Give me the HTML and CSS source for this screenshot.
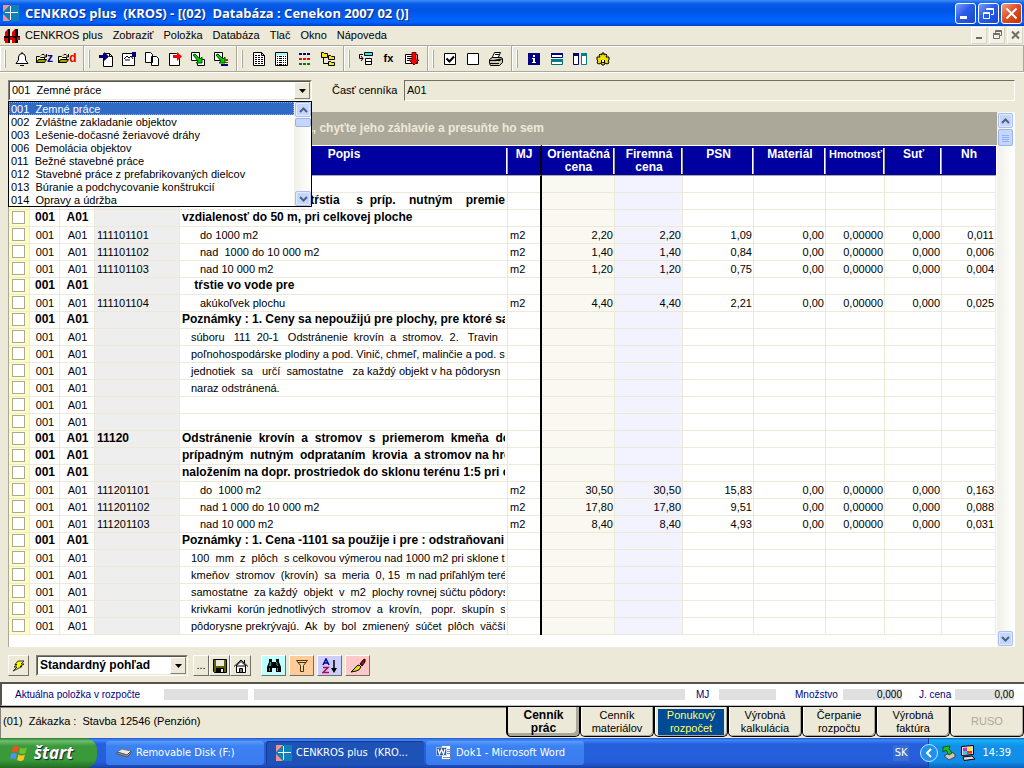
FILE: index.html
```html
<!DOCTYPE html>
<html lang="sk">
<head>
<meta charset="utf-8">
<title>CENKROS plus</title>
<link rel="stylesheet" href="styles.css">
</head>
<body>
<svg class="defs" width="0" height="0" aria-hidden="true">
  <symbol id="logo" viewBox="0 0 16 16"><path fill="#1080b8" d="M0 0h16v16H0z"/><path fill="#f89090" d="M0 0h7L0 7zM0 9l7 7H0z"/><path fill="#fff" d="M7 1h1v14H7zM2 7h13v1H2z"/></symbol>
  <symbol id="up" viewBox="0 0 9 6"><path fill="none" stroke="#4d6185" stroke-width="2" d="M1 5l3.5-3.500L8 5"/></symbol>
  <symbol id="down" viewBox="0 0 9 6"><path fill="none" stroke="#4d6185" stroke-width="2" d="M1 1l3.5 3.500L8 1"/></symbol>
  <symbol id="tri" viewBox="0 0 7 4"><path d="M0 0h7L3.500 4z"/></symbol>
  <symbol id="folder" viewBox="0 0 11 11"><path fill="#ffff80" stroke="#000" d="M.5 9.500v-6h3l1 1h4v2"/><path fill="#a0a000" stroke="#000" d="M.5 9.500l2-3h8l-2 3z"/><path fill="none" stroke="#000" d="M5 2.500l1-1h2l2 2M10.500 1v3H8"/></symbol>
</svg>

<header class="titlebar">
  <svg class="i16"><use href="#logo"/></svg>
  <h1>CENKROS plus  (KROS) - [(02)  Databáza : Cenekon 2007 02 ()]</h1>
  <div class="winbtns">
    <button aria-label="Minimalizovať"><svg width="19" height="19"><path fill="#fff" d="M4 12h7v3H4z"/></svg></button>
    <button aria-label="Obnoviť"><svg width="19" height="19"><path fill="none" stroke="#fff" d="M7.500 6V4.500h7v6H12M7 5.500h7M4.500 8.500h6v6h-6zM4 9.500h7"/></svg></button>
    <button class="close" aria-label="Zavrieť"><svg width="19" height="19"><path stroke="#fff" stroke-width="2" d="M4.500 4.500l10 10M14.500 4.500l-10 10"/></svg></button>
  </div>
</header>

<nav class="menubar">
  <svg class="i16" viewBox="0 0 16 16"><path fill="#e00000" d="M1 4l3-3v14H1zM8 4l3-3v14H8z"/><path d="M4 1h2v14H4zM11 1h3v14h-3zM0 8h16v2H0z"/><path fill="#e00000" d="M6 9h3v3H6zM0 10h2v3H0zM13 9h3v3h-3z"/></svg>
  <button>CENKROS plus</button><button>Zobraziť</button><button>Položka</button><button>Databáza</button><button>Tlač</button><button>Okno</button><button>Nápoveda</button>
  <div class="mdi">
    <button aria-label="Minimalizovať okno"><svg width="15" height="15"><path fill="#716f64" d="M4 9h6v2H4z"/></svg></button>
    <button aria-label="Obnoviť okno"><svg width="15" height="15"><path fill="none" stroke="#716f64" d="M5.500 5V2.500h6v5H10M5 3.500h7M3.500 6.500h6v4h-6zM3 5.500h7"/></svg></button>
    <button aria-label="Zavrieť okno"><svg width="15" height="15"><path stroke="#716f64" stroke-width="2" d="M4 3.500l7 7M11 3.500l-7 7"/></svg></button>
  </div>
</nav>

<div class="toolbar">
  <div class="group"><i class="grip"></i>
    <button aria-label="Upozornenie"><svg class="i16" viewBox="0 0 16 16"><path fill="#fff" stroke="#000" d="M2 12.500h12L11.500 9V6Q11 2.500 8 2.500T4.500 6v3z"/><path fill="none" stroke="#000" d="M8 1v2M6 14.500h4"/></svg></button>
    <button class="open" aria-label="Otvoriť zákazku"><svg width="11" height="11"><use href="#folder"/></svg><b class="navy">z</b></button>
    <button class="open" aria-label="Otvoriť databázu"><svg width="11" height="11"><use href="#folder"/></svg><b class="red">d</b></button>
  </div>
  <div class="group"><i class="grip"></i>
    <button aria-label="Vložiť položku"><svg class="i16" viewBox="0 0 16 16"><path fill="#fff" stroke="#000" d="M5.500 2.500h6l3 3v10h-9zM11.500 2.500v3h3"/><path fill="#000080" d="M1 4h5V1l5 4.500L6 10V7H1z"/></svg></button>
    <button aria-label="Upraviť položku"><svg class="i16" viewBox="0 0 16 16"><path fill="#fff" stroke="#000" d="M1.500 2.500h12v12h-12z"/><path fill="none" stroke="#000" d="M3 8l3-3 2 2 2-2 2 3M4 9h5"/><path fill="#000080" d="M11 1h4v5h-4z"/></svg></button>
    <button aria-label="Kopírovať"><svg class="i16" viewBox="0 0 16 16"><path fill="#fff" stroke="#000" d="M1.500 1.500h5l2 2v8h-7zM7.500 5.500h5l2 2v7h-7z"/></svg></button>
    <button aria-label="Presunúť"><svg class="i16" viewBox="0 0 16 16"><path fill="#fff" stroke="#000" d="M2.500 2.500h7l3 3v9h-10z"/><path fill="#f00" d="M6 4h4V1l5 4.500L10 10V7H6z"/></svg></button>
    <button aria-label="Kopírovať blok"><svg class="i16" viewBox="0 0 16 16"><path fill="#fff" stroke="#000" d="M1.500 1.500h8v8h-8zM10.500 8.500h4v6h-7v-4"/><path fill="#00d000" stroke="#005000" d="M3 4l2-1 5 5 2-2v6H6l2-2z"/></svg></button>
    <button aria-label="Kopírovať rozpočet"><svg class="i16" viewBox="0 0 16 16"><path fill="#fff" stroke="#000" d="M1.500 1.500h8v8h-8z"/><path fill="#00d000" stroke="#005000" d="M3 4l2-1 5 5 2-2v6H6l2-2z"/><path fill="#f00" d="M12 8h3v2h-3z"/><path fill="#008000" d="M12 11h3v1h-3z"/><path fill="#000080" d="M8 13h7v2H8z"/></svg></button>
  </div>
  <div class="group"><i class="grip"></i>
    <button aria-label="Dokument"><svg class="i16" viewBox="0 0 16 16"><path fill="#fff" stroke="#000" d="M2.500 1.500h8l3 3v10h-11zM10.500 1.500v3h3"/><path stroke="#000" stroke-dasharray="2 1" d="M4 4.500h5M4 6.500h8M4 8.500h8M4 10.500h8M4 12.500h8"/></svg></button>
    <button aria-label="Zoznam"><svg class="i16" viewBox="0 0 16 16"><path fill="#fff" stroke="#000" d="M1.500 1.500h12v13h-12z"/><path fill="#9ff" d="M2 2h11v2H2z"/><path stroke="#000" stroke-dasharray="1 1 3 1" d="M3 5.500h9M3 7.500h9M3 9.500h9M3 11.500h9M3 13.500h9"/></svg></button>
    <button aria-label="Farebný zoznam"><svg class="i16" viewBox="0 0 16 16"><g stroke-width="2" stroke-dasharray="3 1"><path stroke="#000080" d="M2 3h12"/><path stroke="#f00" d="M2 8h12"/><path stroke="#008000" d="M2 13h12"/></g></svg></button>
    <button aria-label="Strom"><svg class="i16" viewBox="0 0 16 16"><path fill="none" stroke="#000" d="M3.500 7v5.500H8M6 5.500h3"/><path fill="#ffe800" stroke="#000" d="M1.500 6.500v-5h2l1 1h3v4zM8.500 8.500v-4h2l1 1h3v3zM8.500 14.500v-4h2l1 1h3v3z"/></svg></button>
  </div>
  <div class="group"><i class="grip"></i>
    <button aria-label="Vložiť riadok"><svg class="i16" viewBox="0 0 16 16"><path fill="#0ff" stroke="#000" d="M6.500 1.500h8v3h-8z"/><path fill="#fff" stroke="#000" d="M7.500 7.500h6v3h-6zM7.500 10.500h6v3h-6z"/><path fill="none" stroke="#000" d="M5 3.500H1.500v4H5M3 5l2 2.500L3 10"/></svg></button>
    <button class="fx">fx</button>
    <button aria-label="Filtrovať"><svg class="i16" viewBox="0 0 16 16"><path fill="#fff" stroke="#000" d="M1.500 3.500h12v9h-12z"/><path stroke="#000" d="M3 5.500h9M3 7.500h9M3 9.500h9"/><path fill="#f00" stroke="#800000" d="M8 1.500h4V9h3l-5 5-5-5h3z"/></svg></button>
  </div>
  <div class="group"><i class="grip"></i>
    <button aria-label="Označiť"><svg class="i16" viewBox="0 0 16 16"><path fill="#fff" stroke="#000" d="M2.500 2.500h11v11h-11z"/><path fill="none" stroke="#000" stroke-width="2" d="M4.500 7.500l3 3 4.500-5"/></svg></button>
    <button aria-label="Zrušiť označenie"><svg class="i16" viewBox="0 0 16 16"><path fill="#fff" stroke="#000" d="M2.500 2.500h11v11h-11z"/></svg></button>
    <button aria-label="Tlačiť"><svg class="i16" viewBox="0 0 16 16"><path fill="#fff" stroke="#000" d="M4 7l2.500-5.500h6L10 7"/><path fill="#c8c8b8" stroke="#000" d="M1.500 8.500l3-2h9l1 1v4l-3 3h-9l-1-2z"/><path stroke="#000" d="M2 9.500h10l2-2M2 12.500h9M7 3.500h4"/><path fill="#ff0" d="M8 10h2v1H8z"/></svg></button>
  </div>
  <div class="group last"><i class="grip"></i>
    <button aria-label="Informácie"><svg class="i16" viewBox="0 0 16 16"><path fill="#000080" d="M2 2h12v12H2z"/><path fill="#fff" d="M7 4h2v2H7zM6 7h3v4h1v1H6v-1h1V8H6z"/></svg></button>
    <button aria-label="Rozdeliť vodorovne"><svg class="i16" viewBox="0 0 16 16"><path fill="#fff" stroke="#000080" d="M2.500 2.500h11v4h-11z"/><path fill="#000080" d="M2 2h12v2H2z"/><path fill="#fff" stroke="#007070" d="M2.500 8.500h11v5h-11z"/><path fill="#008080" d="M2 8h12v3H2z"/></svg></button>
    <button aria-label="Rozdeliť zvisle"><svg class="i16" viewBox="0 0 16 16"><path fill="#fff" stroke="#000080" d="M1.500 3.500h5v10h-5z"/><path fill="#000080" d="M1 2h6v3H1z"/><path fill="#fff" stroke="#008080" d="M9.500 3.500h5v10h-5z"/><path fill="#008080" d="M9 2h6v3H9z"/></svg></button>
    <button aria-label="Nastavenia"><svg class="i16" viewBox="0 0 16 16"><path fill="#f4e000" stroke="#000" d="M7 2h2v2l2-1 1 1-1 2h3v3l-1 1 1 2-2 1-2-1-1 2H7l-1-2-2 1-2-1 1-2-1-1V6h3L4 4l1-1 2 1z"/><path d="M6 9h4v3H6z"/><path fill="#fff" d="M7 9h2v2H7z"/></svg></button>
  </div>
</div>

<main>
  <div class="filter">
    <div class="combo">
      <select aria-label="Časť"><option>001&nbsp; Zemné práce</option></select>
      <span class="arrow"><svg width="7" height="4"><use href="#tri"/></svg></span>
      <div class="droplist">
        <ul role="listbox" aria-label="Časti">
          <li role="option" aria-selected="true">001  Zemné práce</li>
          <li role="option">002  Zvláštne zakladanie objektov</li>
          <li role="option">003  Lešenie-dočasné žeriavové dráhy</li>
          <li role="option">006  Demolácia objektov</li>
          <li role="option">011  Bežné stavebné práce</li>
          <li role="option">012  Stavebné práce z prefabrikovaných dielcov</li>
          <li role="option">013  Búranie a podchycovanie konštrukcií</li>
          <li role="option">014  Opravy a údržba</li>
        </ul>
        <div class="scroll"><button aria-label="Nahor"><svg width="9" height="6"><use href="#up"/></svg></button><i class="thumb short"></i><i class="track"></i><button aria-label="Nadol"><svg width="9" height="6"><use href="#down"/></svg></button></div>
      </div>
    </div>
    <label for="cast">Časť cenníka</label>
    <input id="cast" type="text" value="A01">
  </div>

  <div class="gridbox">
    <div class="gridmain">
      <div class="groupbar">Ak chcete zoskupiť údaje podľa stĺpca, chyťte jeho záhlavie a presuňte ho sem</div>
      <table>
        <colgroup><col class="w-chk"><col class="w-part"><col class="w-cen"><col class="w-code"><col><col class="w-mj"><col class="w-or"><col class="w-fir"><col class="w-psn"><col class="w-mat"><col class="w-hm"><col class="w-sut"><col class="w-nh"></colgroup>
        <thead><tr><th></th><th></th><th></th><th></th><th>Popis</th><th>MJ</th><th>Orientačná cena</th><th>Firemná cena</th><th>PSN</th><th>Materiál</th><th>Hmotnosť</th><th>Suť</th><th>Nh</th></tr></thead>
        <tbody>
<tr class="b"><td><input type="checkbox" aria-label="Riadok 1"></td><td></td><td></td><td></td><td></td><td></td><td></td><td></td><td></td><td></td><td></td><td></td><td></td></tr>
<tr class="b"><td><input type="checkbox" aria-label="Riadok 2"></td><td></td><td></td><td></td><td><p class="tail">tŕstia     s  príp.    nutným    premie</p></td><td></td><td></td><td></td><td></td><td></td><td></td><td></td><td></td></tr>
<tr class="b"><td><input type="checkbox" aria-label="Riadok 3"></td><td>001</td><td>A01</td><td></td><td><p>vzdialenosť do 50 m, pri celkovej ploche</p></td><td></td><td></td><td></td><td></td><td></td><td></td><td></td><td></td></tr>
<tr><td><input type="checkbox" aria-label="Riadok 4"></td><td>001</td><td>A01</td><td>111101101</td><td><p class="in2">do 1000 m2</p></td><td>m2</td><td>2,20</td><td>2,20</td><td>1,09</td><td>0,00</td><td>0,00000</td><td>0,000</td><td>0,011</td></tr>
<tr><td><input type="checkbox" aria-label="Riadok 5"></td><td>001</td><td>A01</td><td>111101102</td><td><p class="in2">nad  1000 do 10 000 m2</p></td><td>m2</td><td>1,40</td><td>1,40</td><td>0,84</td><td>0,00</td><td>0,00000</td><td>0,000</td><td>0,006</td></tr>
<tr><td><input type="checkbox" aria-label="Riadok 6"></td><td>001</td><td>A01</td><td>111101103</td><td><p class="in2">nad 10 000 m2</p></td><td>m2</td><td>1,20</td><td>1,20</td><td>0,75</td><td>0,00</td><td>0,00000</td><td>0,000</td><td>0,004</td></tr>
<tr class="b"><td><input type="checkbox" aria-label="Riadok 7"></td><td>001</td><td>A01</td><td></td><td><p class="in1"> tŕstie vo vode pre</p></td><td></td><td></td><td></td><td></td><td></td><td></td><td></td><td></td></tr>
<tr><td><input type="checkbox" aria-label="Riadok 8"></td><td>001</td><td>A01</td><td>111101104</td><td><p class="in2">akúkoľvek plochu</p></td><td>m2</td><td>4,40</td><td>4,40</td><td>2,21</td><td>0,00</td><td>0,00000</td><td>0,000</td><td>0,025</td></tr>
<tr class="b"><td><input type="checkbox" aria-label="Riadok 9"></td><td>001</td><td>A01</td><td></td><td><p>Poznámky : 1. Ceny sa nepoužijú pre plochy, pre ktoré sa</p></td><td></td><td></td><td></td><td></td><td></td><td></td><td></td><td></td></tr>
<tr><td><input type="checkbox" aria-label="Riadok 10"></td><td>001</td><td>A01</td><td></td><td><p class="in1">súboru   111  20-1   Odstránenie  krovín  a  stromov.  2.   Travin</p></td><td></td><td></td><td></td><td></td><td></td><td></td><td></td><td></td></tr>
<tr><td><input type="checkbox" aria-label="Riadok 11"></td><td>001</td><td>A01</td><td></td><td><p class="in1">poľnohospodárske plodiny a pod. Vinič, chmeľ, malinčie a pod. s</p></td><td></td><td></td><td></td><td></td><td></td><td></td><td></td><td></td></tr>
<tr><td><input type="checkbox" aria-label="Riadok 12"></td><td>001</td><td>A01</td><td></td><td><p class="in1">jednotiek  sa   určí  samostatne   za každý objekt v ha pôdorysn</p></td><td></td><td></td><td></td><td></td><td></td><td></td><td></td><td></td></tr>
<tr><td><input type="checkbox" aria-label="Riadok 13"></td><td>001</td><td>A01</td><td></td><td><p class="in1">naraz odstránená.</p></td><td></td><td></td><td></td><td></td><td></td><td></td><td></td><td></td></tr>
<tr><td><input type="checkbox" aria-label="Riadok 14"></td><td>001</td><td>A01</td><td></td><td></td><td></td><td></td><td></td><td></td><td></td><td></td><td></td><td></td></tr>
<tr><td><input type="checkbox" aria-label="Riadok 15"></td><td>001</td><td>A01</td><td></td><td></td><td></td><td></td><td></td><td></td><td></td><td></td><td></td><td></td></tr>
<tr class="b"><td><input type="checkbox" aria-label="Riadok 16"></td><td>001</td><td>A01</td><td>11120</td><td><p>Odstránenie  krovín  a  stromov  s  priemerom  kmeňa  do</p></td><td></td><td></td><td></td><td></td><td></td><td></td><td></td><td></td></tr>
<tr class="b"><td><input type="checkbox" aria-label="Riadok 17"></td><td>001</td><td>A01</td><td></td><td><p>prípadným  nutným  odprataním  krovia  a stromov na hro</p></td><td></td><td></td><td></td><td></td><td></td><td></td><td></td><td></td></tr>
<tr class="b"><td><input type="checkbox" aria-label="Riadok 18"></td><td>001</td><td>A01</td><td></td><td><p>naložením na dopr. prostriedok do sklonu terénu 1:5 pri c</p></td><td></td><td></td><td></td><td></td><td></td><td></td><td></td><td></td></tr>
<tr><td><input type="checkbox" aria-label="Riadok 19"></td><td>001</td><td>A01</td><td>111201101</td><td><p class="in2">do  1000 m2</p></td><td>m2</td><td>30,50</td><td>30,50</td><td>15,83</td><td>0,00</td><td>0,00000</td><td>0,000</td><td>0,163</td></tr>
<tr><td><input type="checkbox" aria-label="Riadok 20"></td><td>001</td><td>A01</td><td>111201102</td><td><p class="in2">nad 1 000 do 10 000 m2</p></td><td>m2</td><td>17,80</td><td>17,80</td><td>9,51</td><td>0,00</td><td>0,00000</td><td>0,000</td><td>0,088</td></tr>
<tr><td><input type="checkbox" aria-label="Riadok 21"></td><td>001</td><td>A01</td><td>111201103</td><td><p class="in2">nad 10 000 m2</p></td><td>m2</td><td>8,40</td><td>8,40</td><td>4,93</td><td>0,00</td><td>0,00000</td><td>0,000</td><td>0,031</td></tr>
<tr class="b"><td><input type="checkbox" aria-label="Riadok 22"></td><td>001</td><td>A01</td><td></td><td><p>Poznámky : 1. Cena -1101 sa použije i pre : odstraňovani</p></td><td></td><td></td><td></td><td></td><td></td><td></td><td></td><td></td></tr>
<tr><td><input type="checkbox" aria-label="Riadok 23"></td><td>001</td><td>A01</td><td></td><td><p class="in1">100  mm  z  plôch  s celkovou výmerou nad 1000 m2 pri sklone te</p></td><td></td><td></td><td></td><td></td><td></td><td></td><td></td><td></td></tr>
<tr><td><input type="checkbox" aria-label="Riadok 24"></td><td>001</td><td>A01</td><td></td><td><p class="in1">kmeňov  stromov  (krovín)  sa  meria  0, 15  m nad priľahlým terén</p></td><td></td><td></td><td></td><td></td><td></td><td></td><td></td><td></td></tr>
<tr><td><input type="checkbox" aria-label="Riadok 25"></td><td>001</td><td>A01</td><td></td><td><p class="in1">samostatne  za každý  objekt  v  m2  plochy rovnej súčtu pôdorysn</p></td><td></td><td></td><td></td><td></td><td></td><td></td><td></td><td></td></tr>
<tr><td><input type="checkbox" aria-label="Riadok 26"></td><td>001</td><td>A01</td><td></td><td><p class="in1">krivkami  korún jednotlivých  stromov  a  krovín,   popr.  skupín  s</p></td><td></td><td></td><td></td><td></td><td></td><td></td><td></td><td></td></tr>
<tr><td><input type="checkbox" aria-label="Riadok 27"></td><td>001</td><td>A01</td><td></td><td><p class="in1">pôdorysne prekrývajú.  Ak  by  bol  zmienený  súčet  plôch  väčší</p></td><td></td><td></td><td></td><td></td><td></td><td></td><td></td><td></td></tr>
        </tbody>
      </table>
    </div>
    <div class="scroll"><button aria-label="Posunúť nahor"><svg width="9" height="6"><use href="#up"/></svg></button><i class="thumb"><svg width="7" height="8"><path stroke="#8cb0f8" d="M0 1.500h7M0 3.500h7M0 5.500h7M0 7.500h7"/></svg></i><i class="track"></i><button aria-label="Posunúť nadol"><svg width="9" height="6"><use href="#down"/></svg></button></div>
  </div>

  <div class="viewbar">
    <button class="raised" aria-label="Obnoviť"><svg class="i16" viewBox="0 0 16 16"><path fill="#ff0" stroke="#000" stroke-width=".8" d="M7 3h6L10 6h3L9 8.500h2L2 13l4-4H3l3-2.500H4z"/></svg></button>
    <div class="combo view">
      <select aria-label="Pohľad"><option>Štandardný pohľad</option></select>
      <span class="arrow"><svg width="7" height="4"><use href="#tri"/></svg></span>
    </div>
    <div class="set">
      <button class="raised dots">...</button>
      <button class="raised" aria-label="Uložiť pohľad"><svg class="i16" viewBox="0 0 16 16"><path fill="#606000" stroke="#000" d="M1.500 1.500h13v13h-12l-1-1z"/><path fill="#ece9d8" d="M4 2h8v6H4z"/><path d="M4 10h8v5H4z"/><path fill="#ece9d8" d="M9 11h2v3H9z"/></svg></button>
      <button class="raised" aria-label="Predvolený pohľad"><svg class="i16" viewBox="0 0 16 16"><path fill="#fff" stroke="#000" d="M3.500 8v6.500h9V8M1 8.500L8 2l7 6.500M11.500 2v3"/><path fill="#fff" stroke="#000" d="M3 8l5-4.500L13 8z"/><path fill="#808080" stroke="#000" d="M6.500 10.500h3v4h-3z"/></svg></button>
    </div>
    <div class="tools">
      <button class="raised cyan" aria-label="Hľadať"><svg class="i16" viewBox="0 0 16 16"><path d="M3 1h3v3h4V1h3v3l2 5v5h-5v-4H6v4H1V9l2-5z"/><path fill="#0aa" d="M4 4h1v4H3zM10 4h1l1 4h-1zM3 10h1v3H3zM11 10h1v3h-1z"/></svg></button>
      <button class="raised orange" aria-label="Filter"><svg class="i16" viewBox="0 0 16 16"><path fill="#e8d8b0" stroke="#503000" d="M2.500 2.500h11l-4 5v6h-3v-6z"/><path stroke="#503000" d="M4 4.500h8"/></svg></button>
      <button class="raised violet" aria-label="Zoradiť"><svg class="i16" viewBox="0 0 16 16"><path fill="none" stroke="#0000a0" stroke-width="1.500" d="M1 7l3-6 3 6M2 5h4"/><path fill="none" stroke="#c00040" stroke-width="1.500" d="M1 9.500h5l-5 5h6"/><path stroke="#000" stroke-width="1.500" d="M12 2v9"/><path d="M9 10h6l-3 5z"/></svg></button>
      <button class="raised pink" aria-label="Farby"><svg class="i16" viewBox="0 0 16 16"><path fill="#c00000" stroke="#000" d="M10 6l3-4 2-1v3l-3 4z"/><path fill="#e8e000" stroke="#000" d="M1 14l4-4q2-3 4-3l2 2q-2 4-5 4z"/></svg></button>
    </div>
  </div>
</main>

<div class="current">
  <span class="title">Aktuálna položka v rozpočte</span>
  <output class="f-code"></output><output class="f-name"></output>
  <span class="mj">MJ</span><output class="f-mj"></output>
  <span class="qty">Množstvo</span><output class="f-num">0,000</output>
  <span class="price">J. cena</span><output class="f-num">0,00</output>
</div>

<div class="bottom">
  <div class="order">(01)  Zákazka :  Stavba 12546 (Penzión)</div>
  <div class="tabs" role="tablist">
    <button role="tab" aria-selected="true"><span>Cenník<br>prác</span></button>
    <button role="tab"><span>Cenník<br>materiálov</span></button>
    <button role="tab" class="offer"><span>Ponukový<br>rozpočet</span></button>
    <button role="tab"><span>Výrobná<br>kalkulácia</span></button>
    <button role="tab"><span>Čerpanie<br>rozpočtu</span></button>
    <button role="tab"><span>Výrobná<br>faktúra</span></button>
    <button role="tab" disabled><span>RUSO</span></button>
  </div>
</div>

<footer class="taskbar">
  <button class="start"><svg width="18" height="18" viewBox="0 0 18 18"><path fill="#f05020" d="M3 3q3-2 6 0L7.500 8.500q-3-2-6 0z"/><path fill="#70c030" d="M10 3.500q3 2 7 0L15.500 9q-3 2-6.500 0z"/><path fill="#5090f0" d="M1 10q3-2 6 0l-1.500 5.500q-3-2-5.500 0z"/><path fill="#f8c820" d="M8.500 10.500q3 2 6.500 0L13.500 16q-3 2-6.500 0z"/></svg>štart</button>
  <div class="tasks">
    <button><svg class="i16" viewBox="0 0 16 16"><path fill="#e8e8e8" stroke="#777" d="M1 7l5-3 9 2-4 4z"/><path fill="#999" stroke="#555" d="M1 7l10 3 4-4v2l-4 4L1 9z"/></svg><span>Removable Disk (F:)</span></button>
    <button class="on"><svg class="i16"><use href="#logo"/></svg><span>CENKROS plus  (KRO...</span></button>
    <button><svg class="i16" viewBox="0 0 16 16"><path fill="#fff" stroke="#6080c0" d="M5.500.5h9v14h-9z"/><path stroke="#7090d0" d="M11 4.500h3M11 6.500h3M11 8.500h3M7 12.500h7"/><path fill="#3060b0" stroke="#fff" stroke-width=".5" d="M.5 2.500h10v8H.5z"/><path fill="none" stroke="#fff" stroke-width="1.200" d="M2 4l1.500 5 2-4.500 2 4.500L9 4"/></svg><span>Dok1 - Microsoft Word</span></button>
  </div>
  <span class="lang">SK</span>
  <div class="tray">
    <button aria-label="Zobraziť skryté ikony"><svg width="18" height="18" viewBox="0 0 18 18"><circle cx="9" cy="9" r="8.500" fill="#2090f0" stroke="#c0e8ff"/><path fill="none" stroke="#fff" stroke-width="2" d="M11 5L7 9l4 4"/></svg></button>
    <svg class="i16" viewBox="0 0 16 16"><path fill="#c8c8c8" stroke="#444" d="M3 11l7-4 4 2v3l-6 3z"/><path fill="#20c020" stroke="#006000" d="M2 2l7-1-1 3 3 4-3 2-3-5-3 2z"/></svg>
    <svg class="i16" viewBox="0 0 16 16"><path fill="#ddd" stroke="#000" d="M1.500 1.500l12-1v9l-12 1zM3 12l9-1 3 3-11 1.500z"/><path fill="#e020c0" d="M3 3l4-.5V6H3z"/><path fill="#f8f020" d="M7 2.500l5-.5v4H7z"/><path fill="#20d0f0" d="M3 6h4v3H3z"/><path fill="#f03030" d="M7 6h5v2.500L7 9z"/></svg>
    <time>14:39</time>
  </div>
</footer>
</body>
</html>
```
FILE: styles.css
```css
* { box-sizing: border-box; }
body {
  margin: 0;
  min-height: 100vh;
  display: flex;
  flex-direction: column;
  overflow: hidden;
  background: #ece9d8;
  color: #000;
  font: 11px/13px "Liberation Sans", Arial, sans-serif;
}
button, select, input { font: inherit; color: inherit; margin: 0; }
button { padding: 0; border: 0; background: none; display: flex; align-items: center; justify-content: center; }
svg { display: block; flex: none; }
.defs { position: absolute; }
.i16 { width: 16px; height: 16px; }

.titlebar {
  display: flex;
  align-items: center;
  height: 26px;
  padding: 0 2px 0 3px;
  gap: 6px;
  background: linear-gradient(#3c8cf8 0, #0a5be8 4px, #0054e3 10px, #0060fa 18px, #0066ff 22px, #0040c8 26px);
}
.titlebar h1 {
  flex: 1;
  margin: 0;
  color: #fff;
  font: bold 13px/20px "Open Sans", "Noto Sans", sans-serif;
  white-space: pre;
  text-shadow: 1px 1px #0a2a80;
}
.winbtns { display: flex; gap: 2px; }
.winbtns button {
  width: 21px;
  height: 21px;
  border: 1px solid #fff;
  border-radius: 3px;
  background: linear-gradient(135deg, #7a9cf8, #2b5ce8 45%, #1848d0);
}
.winbtns .close { background: linear-gradient(135deg, #f0a080, #e05028 45%, #c03000); }

.menubar { display: flex; align-items: center; height: 19px; padding: 0 1px 0 4px; gap: 10px; }
.menubar > .i16 { margin-right: -5px; }
.mdi { display: flex; gap: 2px; margin-left: auto; }
.mdi button { width: 16px; height: 17px; background: #f3f1e8; border: 1px solid; border-color: #fff #d8d4c4 #d8d4c4 #fff; }

.toolbar { display: flex; height: 27px; border: 1px solid #aca899; border-left: 0; box-shadow: inset 0 1px #fff, 0 1px #fff; }
.group { display: flex; align-items: center; padding: 0 4px 0 3px; border-left: 1px solid #fff; border-right: 1px solid #aca899; }
.group.last { flex: 1; border-right: 0; }
.grip { width: 2px; height: 18px; margin-right: 4px; border-left: 1px solid #fff; border-right: 1px solid #aca899; }
.group button { width: 23px; height: 22px; }
.fx { font-weight: bold; }
.open b { font-size: 12px; }
.navy { color: #000080; }
.red { color: #e00000; }

main { flex: 1; display: flex; flex-direction: column; padding: 8px 9px 0 8px; }
.filter { display: flex; align-items: center; height: 21px; margin-bottom: 11px; }
.combo { position: relative; width: 304px; height: 21px; border: 1px solid; border-color: #848278 #fff #fff #848278; }
.combo select {
  width: 100%;
  height: 19px;
  padding: 0 2px;
  border: 1px solid;
  border-color: #55534a #ece9d8 #ece9d8 #55534a;
  border-radius: 0;
  appearance: none;
  background: #fff;
  white-space: pre;
}
.arrow {
  position: absolute;
  top: 1px;
  right: 1px;
  bottom: 1px;
  width: 16px;
  display: flex;
  align-items: center;
  justify-content: center;
  background: #ece9d8;
  border: 1px solid;
  border-color: #fff #848278 #848278 #fff;
  pointer-events: none;
}
.droplist {
  position: absolute;
  z-index: 2;
  top: calc(100% + 1px);
  left: -1px;
  right: -1px;
  display: flex;
  border: 1px solid #000;
  background: #fff;
}
.droplist ul { flex: 1; margin: 0; padding: 0; list-style: none; }
.droplist li { padding: 0 2px; height: 13px; line-height: 14px; white-space: pre; }
.droplist li[aria-selected] { background: #316ac5; color: #fff; outline: 1px dotted #e0a040; outline-offset: -1px; }
.filter label { margin: 0 6px 0 20px; width: 66px; }
.filter input {
  flex: 1;
  height: 21px;
  padding: 0 2px 2px;
  background: #ece9d8;
  border: 1px solid;
  border-color: #716f64 #fff #fff #716f64;
}

.gridbox { flex: 1; display: flex; background: #fff; border-left: 1px solid #aca899; }
.gridmain { flex: 1; min-width: 0; }
.groupbar {
  height: 33px;
  margin-right: -1px;
  padding-left: 84px;
  background: #aca899;
  color: #ece9d8;
  font-size: 12px;
  font-weight: bold;
  line-height: 33px;
}
table { width: 100%; border-collapse: separate; border-spacing: 0; table-layout: fixed; }
.w-chk { width: 21px; } .w-part { width: 30px; } .w-cen { width: 35px; } .w-code { width: 85px; }
.w-mj { width: 34px; } .w-or { width: 73px; } .w-fir { width: 68px; } .w-psn { width: 71px; }
.w-mat { width: 72px; } .w-hm { width: 59px; } .w-sut { width: 57px; } .w-nh { width: 54px; }
th {
  height: 31px;
  padding: 2px 0 0;
  background: linear-gradient(90deg, #fff 50%, #aca899 50%) no-repeat right 2px / 2px 26px #0000a0;
  border-top: 1px solid #fff;
  border-bottom: 1px solid #aca899;
  color: #fff;
  font-size: 12px;
  vertical-align: top;
}
th:last-child { background: #0000a0; }
th:nth-child(11) { font-size: 11px; }
td {
  height: 17px;
  padding: 0 1px 0 2px;
  border: solid #ece9d8;
  border-width: 0 1px 1px 0;
  line-height: 16px;
  text-align: right;
  white-space: pre;
  vertical-align: top;
}
th:nth-child(6) { background-image: none; border-right: 2px solid #000; }
td:nth-child(6) { border-right: 2px solid #000; border-bottom: 0; box-shadow: inset 0 -1px #ece9d8; }
td:nth-child(1) { padding: 1px 3px 0; background: #ffffc0; }
td:nth-child(2), td:nth-child(3) { text-align: center; }
td:nth-child(n+4):nth-child(-n+6) { text-align: left; }
td:nth-child(4) { background: #eee; }
td:nth-child(7) { background: #f9f9f2; }
td:nth-child(8) { background: #f3f3ff; }
td input { appearance: none; display: block; width: 13px; height: 13px; border: 1px solid #aca899; background: #fff; }
td p { margin: 0; margin-right: 1px; overflow: hidden; }
.in1 { padding-left: 9px; }
.in2 { padding-left: 18px; }
.tail { text-align: right; }
.b { font-size: 12px; font-weight: bold; }
.b td { line-height: 15px; }

.scroll { display: flex; flex-direction: column; width: 17px; margin: 0 1px; padding: 1px; background: linear-gradient(90deg, #f0f0e8, #fff); }
.droplist .scroll { margin: 0; padding: 0 0 0 1px; }
.scroll button { height: 15px; background: #c6d6fb; border: 1px solid #aac0f0; border-radius: 2px; box-shadow: inset 0 0 0 1px #dfe9ff; }
.thumb { display: flex; align-items: center; justify-content: center; height: 17px; margin-top: 1px; background: #c6d6fb; border: 1px solid #98b4ec; border-radius: 2px; }
.thumb.short { height: 9px; }
.track { flex: 1; }

.viewbar { display: flex; align-items: center; height: 35px; padding-top: 2px; }
.raised { height: 21px; width: 21px; background: #ece9d8; border: 1px solid; border-color: #fff #716f64 #716f64 #fff; }
.combo.view { width: 152px; margin: 0 5px 0 7px; font-size: 12px; font-weight: bold; }
.set { display: flex; margin-right: 10px; }
.dots { width: 16px; }
.tools { display: flex; gap: 3px; }
.tools .raised { width: 25px; }
.tools .cyan { background: #c0ffff; }
.tools .orange { background: #ffcc99; }
.tools .violet { background: #ccccff; }
.tools .pink { background: #ffc8c8; }

.current {
  display: flex;
  align-items: center;
  height: 24px;
  padding: 0 10px 0 13px;
  background: #fff;
  border: solid #55534a;
  border-width: 2px 0 1px 2px;
  border-bottom-color: #c0c0c0;
  color: #000080;
  font-size: 10px;
  line-height: 12px;
}
.current output { height: 11px; line-height: 11px; background: #e0e0e0; color: #000; text-align: right; }
.current .title { width: 149px; white-space: nowrap; }
.f-code { width: 84px; margin-right: 6px; }
.f-name { flex: 1; }
.f-mj { width: 57px; }
.f-num { width: 59px; }
.mj { width: 34px; padding-left: 11px; }
.qty { width: 67px; padding-left: 19px; }
.price { width: 53px; padding-left: 17px; }

.bottom { display: flex; height: 32px; border-top: 1px solid #000; }
.order { flex: 1; padding: 7px 2px; border: solid #848278; border-width: 1px 0 0 1px; white-space: pre; }
.tabs { display: flex; }
.tabs button {
  width: 74px;
  height: 30px;
  border: 1px solid #000;
  border-top: 0;
  border-radius: 0 0 5px 5px;
  box-shadow: inset 1px 0 #fff, inset -1px -1px #aca899;
  line-height: 13px;
}
.tabs [aria-selected] { border-left-width: 2px; box-shadow: inset -3px -3px #aca899; font-size: 12px; font-weight: bold; }
.offer span { background: #004b96; color: #ffff60; width: 66px; height: 26px; }
.tabs button:disabled { color: #aca899; }

.taskbar {
  display: flex;
  align-items: center;
  height: 30px;
  background: linear-gradient(#1f4fc0 0, #4088f8 2px, #2660dd 6px, #245edb 24px, #1941a5 30px);
  color: #fff;
  font: 11px/14px "DejaVu Sans Condensed", "DejaVu Sans", sans-serif;
}
.start {
  width: 97px;
  height: 30px;
  gap: 6px;
  margin-right: 9px;
  padding-right: 14px;
  border-radius: 0 12px 12px 0;
  background: linear-gradient(#2f7a2f 0, #6cc06c 3px, #3c983c 8px, #389a38 22px, #246b24 30px);
  font: italic bold 17px/20px "Open Sans", "Noto Sans", sans-serif;
  text-shadow: 1px 1px 1px #123;
}
.tasks { display: flex; flex: 1; gap: 2px; }
.tasks button {
  width: 158px;
  height: 24px;
  gap: 4px;
  padding: 0 10px;
  justify-content: flex-start;
  border-radius: 3px;
  background: linear-gradient(#5c9cfc, #3c81f3 5px, #3a7cee);
}
.tasks .on { background: #1e52b7; box-shadow: inset 1px 1px #153c8c; }
.tasks span { white-space: pre; }
.lang { padding: 1px 2px; margin-right: 19px; background: #3a6ccf; }
.tray {
  display: flex;
  align-items: center;
  gap: 3px;
  height: 30px;
  padding-right: 13px;
  background: linear-gradient(#0c60c0 0, #18b0f4 2px, #1290e8 8px, #0f8eea 24px, #0b62b8 30px);
  border-left: 1px solid #0a4a9a;
}
.tray button { margin-left: -9px; }
.tray time { margin-left: 3px; }
```
